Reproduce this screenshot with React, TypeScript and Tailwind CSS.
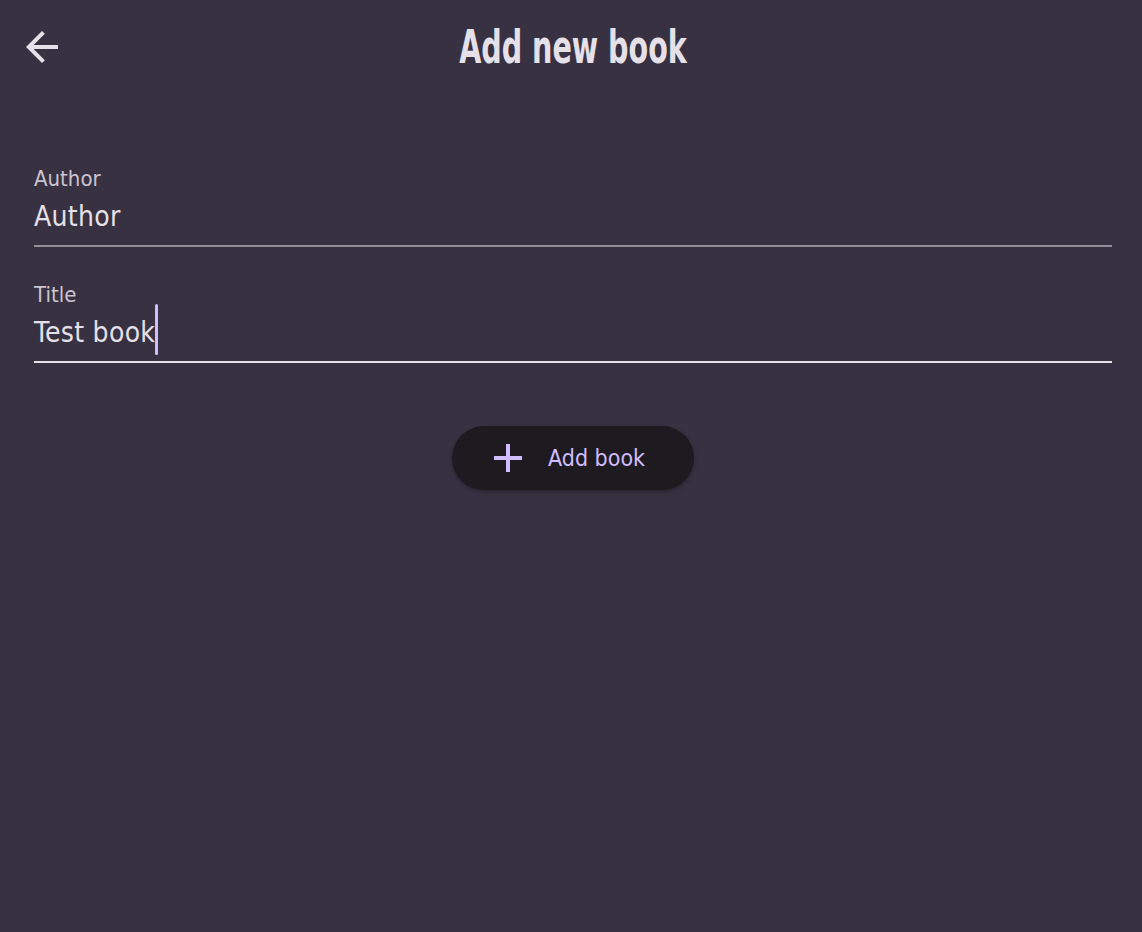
import React, { useState } from 'react';

const bodyFont = { fontFamily: '"DejaVu Sans Condensed", "DejaVu Sans", sans-serif' };

const BackArrow: React.FC = () => (
    <svg viewBox="0 0 24 24" className="w-12 h-12 fill-[#e6e0e9]">
        <path d="M20 11H7.83l5.59-5.59L12 4l-8 8 8 8 1.41-1.41L7.83 13H20v-2z" />
    </svg>
);

const PlusIcon: React.FC = () => (
    <svg viewBox="0 0 24 24" className="w-12 h-12 fill-[#d0bcff]">
        <path d="M19 13h-6v6h-2v-6H5v-2h6V5h2v6h6v2z" />
    </svg>
);

interface FieldProps {
    label: string;
    value: string;
    focused?: boolean;
}

const Field: React.FC<FieldProps> = ({ label, value, focused }) => (
    <div
        className={
            focused
                ? "flex flex-col pb-3 border-b-2 border-[#e6e0e9]"
                : "flex flex-col pb-3 border-b-2 border-[#938f99]"
        }
    >
        <span className="text-[22px] leading-[24px] text-[#cac4d0]">{label}</span>
        <div className="mt-[10px] text-[28px] leading-[32px] tracking-[0.3px] text-[#e6e0e9]">
            <span className="relative">
                {value}
                {focused && (
                    <span className="absolute left-full top-[-12px] w-[3px] h-[51px] rounded-full bg-[#d0bcff]" />
                )}
            </span>
        </div>
    </div>
);

export default function App() {
    const [author] = useState<string>("Author");
    const [title] = useState<string>("Test book");

    return (
        <main className="min-h-[932px] w-full bg-[#383142]" style={bodyFont}>
            {/* barra superior */}
            <header className="grid grid-cols-[1fr_auto_1fr] items-center h-[94px] pl-[18px] pr-[14px]">
                <button className="w-12 h-12 flex items-center justify-center">
                    <BackArrow />
                </button>
                <h1 className="text-[46px] leading-[56px] font-bold text-[#e6e0e9] scale-x-[0.69]">
                    Add new book
                </h1>
                <div />
            </header>

            <section className="flex flex-col pl-[34px] pr-[30px] pt-[73px]">
                <Field label="Author" value={author} />
                <div className="mt-9">
                    <Field label="Title" value={title} focused />
                </div>

                <div className="flex justify-center mt-[63px]">
                    <button className="flex items-center gap-4 w-[242px] h-16 pl-8 rounded-full bg-[#1d1b20] shadow-[0_2px_4px_rgba(0,0,0,0.3)]">
                        <PlusIcon />
                        <span className="text-[23px] leading-[28px] text-[#d0bcff]">Add book</span>
                    </button>
                </div>
            </section>
        </main>
    );
}
